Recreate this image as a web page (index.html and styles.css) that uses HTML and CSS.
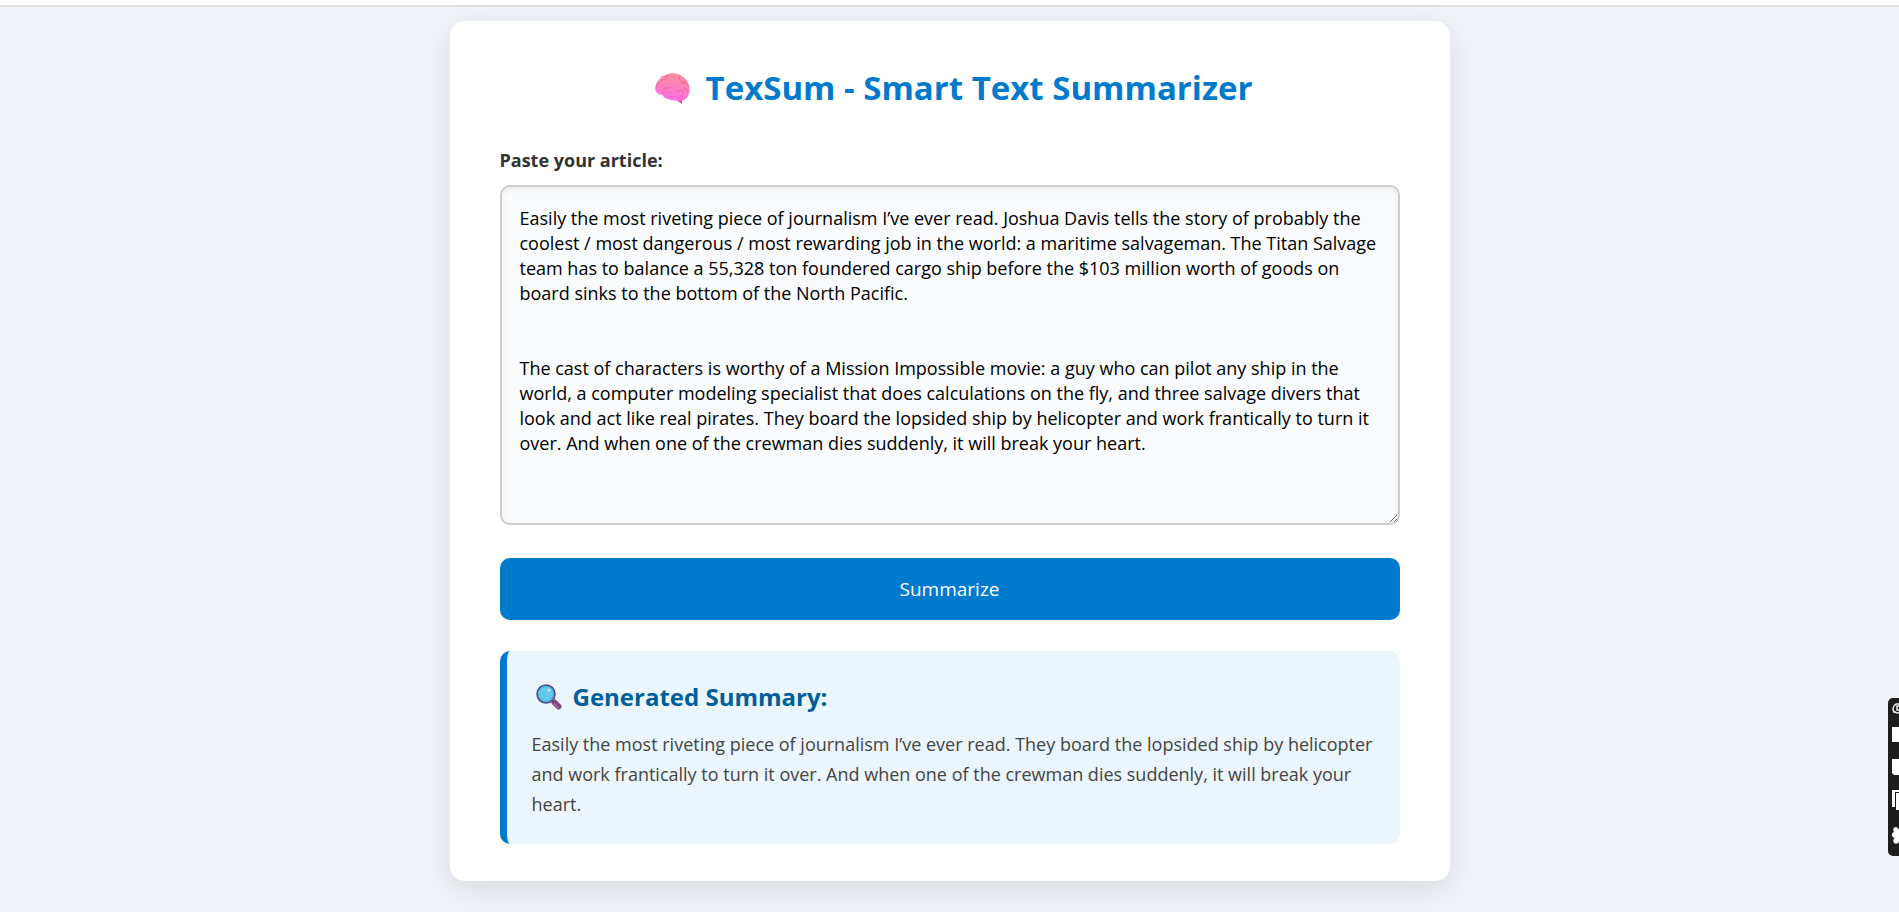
FILE: index.html
```html
<!DOCTYPE html>
<html lang="en">
<head>
<meta charset="utf-8">
<meta name="viewport" content="width=device-width, initial-scale=1">
<title>TexSum - Smart Text Summarizer</title>
<link rel="stylesheet" href="styles.css">
</head>
<body>
<header class="topbar"></header>
<main class="card">
  <h1 class="title">
    <svg class="brain" viewBox="0 0 35 31" aria-hidden="true">
      <defs>
        <linearGradient id="brain-fill" x1="0.6" y1="0" x2="0.4" y2="1">
          <stop offset="0" stop-color="#fb9598"/>
          <stop offset="0.5" stop-color="#fb80c0"/>
          <stop offset="1" stop-color="#ff6be8"/>
        </linearGradient>
      </defs>
      <path d="M21 26 L27 26 L27 31 C25 30 23 28 21 26Z" fill="#f23fa9"/>
      <path d="M9 3 C12 0 20 -1 25 2 C30 4 34 9 34.500 15 C35 20 33 25 29 27 C24 28 17 28 13 26 C10 25 8 24 7 21.500 C3 22 0 19 0.300 15 C0.500 10 4 5 9 3Z" fill="url(#brain-fill)"/>
      <path d="M1 15 C2 10 7 7 12 5 M6 4 C8 3 10 4 13 3 M15 1 C14 4 18 5 20 4 M25 2 C23 5 25 9 29 10 M29 10 C32 10 33 12 34 14 M24 12 C26 9 29 10 30 9 M7 21 C8 18 7 16 10 15 C13 16 15 13 16 15 M21 17 C24 19 28 18 30 15 M30 15 C32 16 33 18 33 20 M23 25 C26 24 28 21 29 18" fill="none" stroke="#df578e" stroke-width="1" stroke-linecap="round" opacity="0.6"/>
    </svg>
    <span>TexSum - Smart Text Summarizer</span>
  </h1>
  <form class="form">
    <label class="label" for="article">Paste your article:</label>
    <textarea class="article" id="article" spellcheck="false">Easily the most riveting piece of journalism I’ve ever read. Joshua Davis tells the story of probably the coolest / most dangerous / most rewarding job in the world: a maritime salvageman. The Titan Salvage team has to balance a 55,328 ton foundered cargo ship before the $103 million worth of goods on board sinks to the bottom of the North Pacific.


The cast of characters is worthy of a Mission Impossible movie: a guy who can pilot any ship in the world, a computer modeling specialist that does calculations on the fly, and three salvage divers that look and act like real pirates. They board the lopsided ship by helicopter and work frantically to turn it over. And when one of the crewman dies suddenly, it will break your heart.</textarea>
    <button class="submit" type="button">Summarize</button>
  </form>
  <section class="summary">
    <h2 class="summary-title">
      <svg class="lens" viewBox="0 0 26 26" aria-hidden="true">
        <path d="M15 15 L18 18" stroke="#564880" stroke-width="2"/>
        <path d="M18.500 18.500 L22.500 22.500" stroke="#824482" stroke-width="6" stroke-linecap="round"/>
        <path d="M18 20 L22 24" stroke="#a0649c" stroke-width="2" stroke-linecap="round"/>
        <circle cx="10" cy="10" r="9" fill="#62cbe9" stroke="#544788" stroke-width="1.500"/>
        <circle cx="10" cy="10" r="7.500" fill="none" stroke="#47a9d4" stroke-width="1"/>
        <circle cx="13" cy="6" r="1.500" fill="#b9ecfb"/>
      </svg>
      <span>Generated Summary:</span>
    </h2>
    <p class="summary-text">Easily the most riveting piece of journalism I’ve ever read. They board the lopsided ship by helicopter and work frantically to turn it over. And when one of the crewman dies suddenly, it will break your heart.</p>
  </section>
</main>
<aside class="dock" aria-hidden="true">
  <svg class="dock-icons" viewBox="0 0 11 158">
    <path d="M11 6 H8 Q5 8 5 12 Q6 15 11 15 M11 8 H9 V12 H11 M5 14 H8" fill="none" stroke="#e8e8e8" stroke-width="1.500"/>
    <path d="M4 29 H11 V44 H4Z M4 61 H11 V77 H6 L4 75Z" fill="#fff"/>
    <path d="M4 92 H11 V94 H7 V109 H4Z M8 95 H11 V112 H8Z" fill="#fff"/>
    <path d="M11 132 Q10 129 7 129 Q4 131 6 134 Q3 135 4 138 Q5 140 7 140 Q4 142 6 145 Q9 147 11 144Z" fill="#fff"/>
  </svg>
</aside>
</body>
</html>
```
FILE: styles.css
```css
* {
  box-sizing: border-box;
}

body {
  margin: 0;
  min-height: 100vh;
  background: #f0f4f8;
  color: #333;
  font-family: "Segoe UI", "Open Sans", "Noto Sans", sans-serif;
  overflow-x: hidden;
}

.topbar {
  height: 7px;
  background: #fff;
  border-bottom: 2px solid #dfe1e2;
}

.card {
  max-width: 1000px;
  margin: 14px auto 31px;
  padding: 40px 50px 37px;
  background: #fff;
  border-radius: 15px;
  box-shadow: 0 8px 30px rgba(0, 0, 0, 0.1);
}

.title {
  display: flex;
  align-items: center;
  justify-content: center;
  gap: 16px;
  margin: 0 0 32px;
  padding-left: 8px;
  color: #007acc;
  font-size: 33px;
  line-height: 54px;
}

.brain {
  width: 35px;
  height: 31px;
}

.form {
  display: flex;
  flex-direction: column;
}

.label {
  margin-bottom: 12px;
  font-size: 18px;
  font-weight: 700;
  line-height: 26px;
}

.article {
  width: 100%;
  height: 340px;
  padding: 19px 18px;
  border: 2px solid #ccc;
  border-radius: 10px;
  outline: none;
  background: #f9fbfd;
  color: #000;
  box-shadow: inset 0 2px 6px rgba(0, 0, 0, 0.06);
  font-family: inherit;
  font-size: 18px;
  line-height: 25px;
  resize: vertical;
}

.submit {
  height: 62px;
  margin-top: 33px;
  border: 0;
  border-radius: 10px;
  background: #007acc;
  color: #fff;
  font-family: inherit;
  font-size: 19px;
}

.summary {
  margin-top: 31px;
  padding: 30px 25px 25px;
  border-left: 7px solid #007acc;
  border-radius: 10px;
  background: #eaf5fc;
}

.summary-title {
  display: flex;
  align-items: center;
  gap: 11px;
  margin: 0 0 16px;
  padding-left: 4px;
  color: #005f99;
  font-size: 24px;
  line-height: 32px;
}

.lens {
  width: 26px;
  height: 26px;
}

.summary-text {
  margin: 0;
  color: #444;
  font-size: 18px;
  line-height: 30px;
}

.dock {
  position: fixed;
  top: 698px;
  right: 0;
  width: 11px;
  height: 158px;
  border-radius: 5px 0 0 5px;
  background: #1d1d1d;
  overflow: hidden;
}

.dock-icons {
  display: block;
  width: 11px;
  height: 158px;
}
```
